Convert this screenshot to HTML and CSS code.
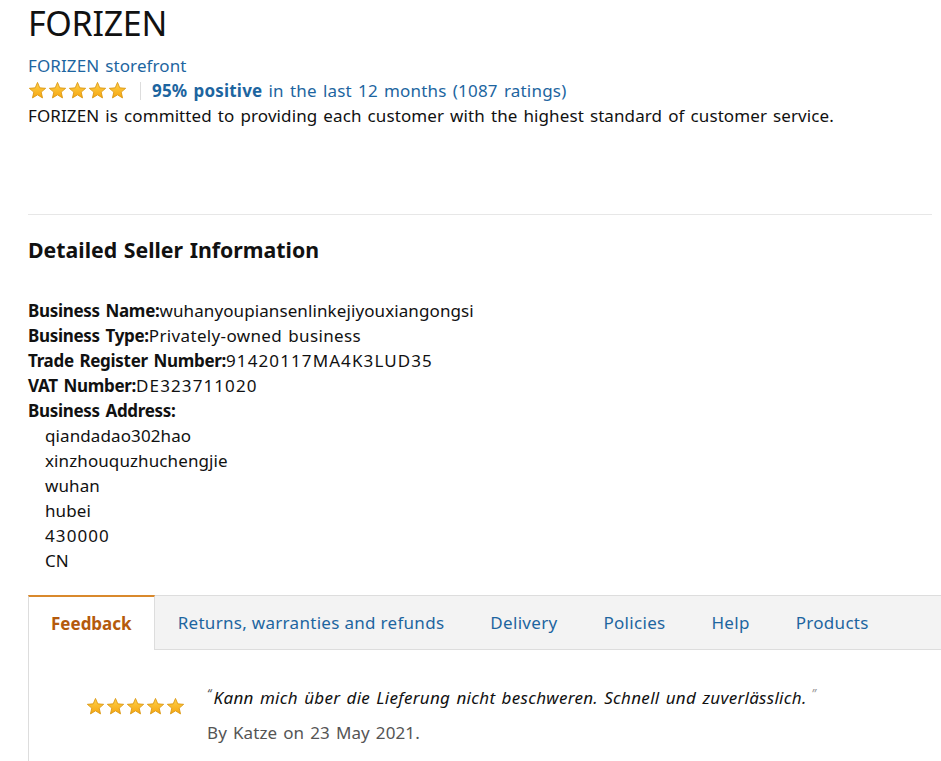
FILE: index.html
```html
<!DOCTYPE html>
<html lang="en">
<head>
<meta charset="utf-8">
<title>FORIZEN</title>
<link rel="stylesheet" href="styles.css">
</head>
<body>
<svg class="defs" width="0" height="0" aria-hidden="true">
  <defs>
    <linearGradient id="starfill" x1="0" y1="0" x2="0" y2="1">
      <stop offset="0" stop-color="#ffd24a"/>
      <stop offset="1" stop-color="#f5a50f"/>
    </linearGradient>
    <symbol id="star" viewBox="0 0 20 20">
      <polygon points="10,1.5 12.4,7.2 18.6,7.7 13.9,11.7 15.3,17.8 10,14.6 4.7,17.8 6.1,11.7 1.4,7.7 7.6,7.2" fill="url(#starfill)" stroke="#d9950f" stroke-width="0.9" stroke-linejoin="round"/>
    </symbol>
  </defs>
</svg>
<div class="page">
  <h1 class="title">FORIZEN</h1>
  <div class="summary">
    <a class="link" href="#">FORIZEN storefront</a>
    <div class="rating-row">
      <span class="stars">
        <svg class="star"><use href="#star"/></svg><svg class="star"><use href="#star"/></svg><svg class="star"><use href="#star"/></svg><svg class="star"><use href="#star"/></svg><svg class="star"><use href="#star"/></svg>
      </span>
      <span class="sep"></span>
      <a class="link rating-text" href="#"><b>95% positive</b> in the last 12 months (1087 ratings)</a>
    </div>
    <p class="desc">FORIZEN is committed to providing each customer with the highest standard of customer service.</p>
  </div>

  <hr class="divider">

  <h2 class="section-title">Detailed Seller Information</h2>

  <div class="details">
    <div><b>Business Name:</b>wuhanyoupiansenlinkejiyouxiangongsi</div>
    <div><b>Business Type:</b><span class="wide">Privately-owned business</span></div>
    <div><b>Trade Register Number:</b><span class="num">91420117MA4K3LUD35</span></div>
    <div><b>VAT Number:</b><span class="num">DE323711020</span></div>
    <div><b>Business Address:</b></div>
    <div class="addr">qiandadao302hao</div>
    <div class="addr">xinzhouquzhuchengjie</div>
    <div class="addr">wuhan</div>
    <div class="addr">hubei</div>
    <div class="addr"><span class="num">430000</span></div>
    <div class="addr">CN</div>
  </div>

  <div class="tabs-box">
    <div class="tab-bar">
      <span class="tab active">Feedback</span>
      <span class="tab">Returns, warranties and refunds</span>
      <span class="tab">Delivery</span>
      <span class="tab">Policies</span>
      <span class="tab">Help</span>
      <span class="tab">Products</span>
      <span class="tab-fill"></span>
    </div>
    <div class="tab-content">
      <div class="review">
        <span class="stars review-stars">
          <svg class="star"><use href="#star"/></svg><svg class="star"><use href="#star"/></svg><svg class="star"><use href="#star"/></svg><svg class="star"><use href="#star"/></svg><svg class="star"><use href="#star"/></svg>
        </span>
        <div class="review-body">
          <p class="quote"><span class="qmark">&ldquo;</span>Kann mich über die Lieferung nicht beschweren. Schnell und zuverlässlich.<span class="qmark close">&rdquo;</span></p>
          <p class="byline">By Katze on 23 May 2021.</p>
        </div>
      </div>
    </div>
  </div>
</div>
</body>
</html>
```

FILE: styles.css
```css
html, body {
  margin: 0;
  padding: 0;
  overflow: hidden;
  background: #fff;
}

body {
  font-family: "Noto Sans", "Liberation Sans", sans-serif;
  font-size: 17px;
  line-height: 25px;
  letter-spacing: 0.1px;
  word-spacing: 1.5px;
  color: #111;
}

.defs {
  position: absolute;
  width: 0;
  height: 0;
}

.page {
  padding: 0 9px 0 28px;
}

.title {
  margin: 3px 0 0;
  font-size: 34px;
  line-height: 40px;
  font-weight: 400;
  letter-spacing: -0.3px;
  color: #111;
}

.summary {
  margin-top: 10px;
}

.link {
  color: #1d65a0;
  text-decoration: none;
}

.link b {
  font-weight: 700;
}

.rating-text {
  letter-spacing: 0.2px;
}

.rating-row {
  display: flex;
  align-items: center;
  height: 25px;
}

.stars {
  display: inline-flex;
  gap: 1px;
}

.star {
  width: 19px;
  height: 19px;
  display: block;
}

.sep {
  width: 1px;
  height: 18px;
  background: #ddd;
  margin: 0 11px 0 13px;
}

.desc {
  margin: 0;
}

.divider {
  border: 0;
  border-top: 1px solid #e7e7e7;
  margin: 86px 0 0;
  height: 0;
}

.section-title {
  margin: 21px 0 0;
  font-size: 21.3px;
  line-height: 28px;
  font-weight: 700;
  letter-spacing: 0;
  word-spacing: 1px;
}

.details {
  margin-top: 34px;
}

.details b {
  font-weight: 700;
  letter-spacing: -0.3px;
}

.wide {
  letter-spacing: 0.35px;
}

.num {
  letter-spacing: 1.1px;
}

.addr {
  padding-left: 17px;
}

.tabs-box {
  margin-top: 22px;
  margin-right: -30px;
}

.tab-bar {
  display: flex;
  height: 55px;
  box-sizing: border-box;
  background: #f3f3f3;
  border-top: 1px solid #ddd;
}

.tab {
  padding: 0 23px;
  display: flex;
  align-items: center;
  color: #1d65a0;
  border-bottom: 1px solid #ddd;
  white-space: nowrap;
  letter-spacing: 0.3px;
  word-spacing: 0;
}

.tab.active {
  background: #fff;
  color: #b45a0c;
  font-weight: 700;
  letter-spacing: 0;
  border-bottom: 0;
  border-left: 1px solid #ddd;
  border-right: 1px solid #ddd;
  border-top: 2px solid #d9892c;
  margin-top: -1px;
  padding: 0 22px;
}

.tab-fill {
  flex: 1;
  border-bottom: 1px solid #ddd;
}

.tab-content {
  border-left: 1px solid #ddd;
  padding: 31px 0 20px 57px;
}

.review {
  display: flex;
  align-items: flex-start;
  gap: 22px;
}

.review-stars {
  margin-top: 16px;
}

.review-body p {
  margin: 0;
}

.quote {
  font-style: italic;
  font-size: 17px;
  line-height: 25px;
  letter-spacing: 0.3px;
}

.qmark {
  font-size: 12px;
  vertical-align: 6px;
  color: #555;
  margin-right: 2px;
}

.qmark.close {
  margin-left: 5px;
  color: #999;
}

.byline {
  margin-top: 10px !important;
  color: #555;
}
```
